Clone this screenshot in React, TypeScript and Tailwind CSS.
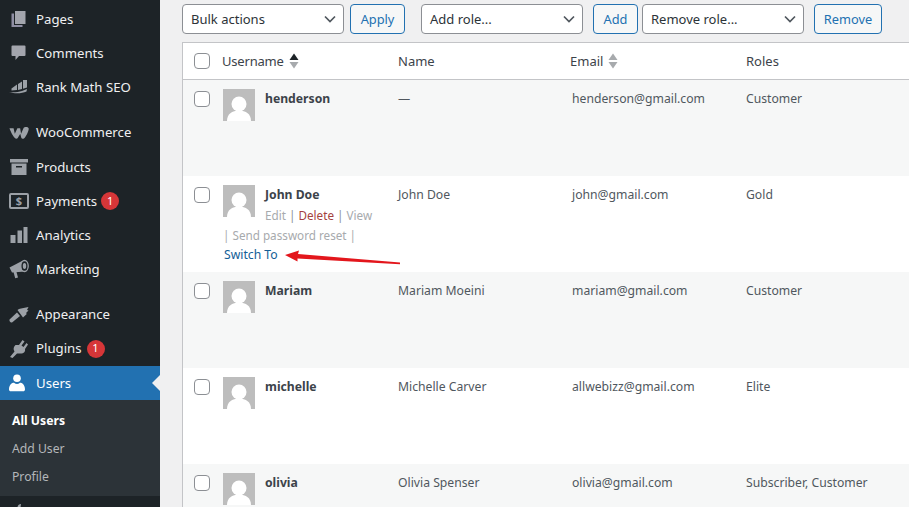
const fontStack = { fontFamily: '"Noto Sans", "Open Sans", sans-serif' };

function PagesIcon() {
  return (
    <svg width="20" height="20" viewBox="0 0 20 20" fill="#a3a5ad">
      <path d="M6 2h10.500v13H6z" />
      <path d="M2.500 4.500H5V16h8.500v2h-11z" fill="#8f8ea3" />
    </svg>
  );
}

function CommentsIcon() {
  return (
    <svg width="20" height="20" viewBox="0 0 20 20" fill="#a3a5ad">
      <path d="M3.500 2.500h12a1 1 0 0 1 1 1V12a1 1 0 0 1-1 1H10l-3.500 4V13h-3a1 1 0 0 1-1-1V3.500a1 1 0 0 1 1-1z" />
    </svg>
  );
}

function RankMathIcon() {
  return (
    <svg width="20" height="20" viewBox="0 0 20 20" fill="#9ca1a7">
      <path d="M0 15c4 .6 9 .2 13-1l5-2-.5 2.500c-5 2.300-12 2.300-17.500.5z" />
      <path d="M2.500 11.500L8 7.500v5.500l-5.500.5zM9 7l4-2.500V12l-4 1zM14 3h4v7.500l-4 1.300z" />
    </svg>
  );
}

function WooIcon() {
  return (
    <svg width="20" height="12" viewBox="0 0 21 14" preserveAspectRatio="none" fill="#9ca1a7">
      <path d="M.5 1.500h4.300l1.300 6.300 2.700-6.300h2.900l1 6.300 2.600-6.500c1-1.600 4.600-1.600 5.300.3.600 1.800-2.300 9-4.600 11.400-1 1-2.600 1-3-.2l-1.200-5-2.600 5c-.7 1-2.300 1-3 .1C4.300 11.300 1.500 5 .5 1.500z" />
    </svg>
  );
}

function ProductsIcon() {
  return (
    <svg width="20" height="20" viewBox="0 0 20 20" fill="#9ca1a7">
      <path d="M1 2h18v3.500H1z" />
      <path fillRule="evenodd" d="M2.500 6.500h15V18h-15zM7 9v1.500h6V9z" />
    </svg>
  );
}

function PaymentsIcon() {
  return (
    <svg width="20" height="16" viewBox="0 0 20 16" fill="none">
      <rect x="1" y="1" width="18" height="14" rx="1" stroke="#9ca1a7" strokeWidth="2" />
      <text x="10" y="12.300" textAnchor="middle" fontSize="11" fontWeight="700" fill="#9ca1a7" fontFamily="Noto Sans">$</text>
    </svg>
  );
}

function AnalyticsIcon() {
  return (
    <svg width="20" height="20" viewBox="0 0 20 20" fill="#9ca1a7">
      <path d="M1.500 10h5v8h-5zM8.500 5.500H13V18H8.500zM14.500 2h4v16h-4z" />
    </svg>
  );
}

function MarketingIcon() {
  return (
    <svg width="20" height="20" viewBox="0 0 20 20" fill="#9ca1a7">
      <path d="M.5 8.500L13 2l3 10.500-13 1z" />
      <path d="M4.500 13h3l1.500 5.500-2.800.7z" />
      <ellipse cx="15.500" cy="7" rx="3.700" ry="5.500" stroke="#9ca1a7" strokeWidth="1.300" fill="#1d2327" />
      <ellipse cx="15.500" cy="7" rx="1.700" ry="3" />
    </svg>
  );
}

function AppearanceIcon() {
  return (
    <svg width="20" height="20" viewBox="0 0 20 20" fill="#9ca1a7">
      <path d="M.5 15.500L8 8.500l3 3.500-8 6.500c-1.500.5-3-1.500-2.500-3z" />
      <path d="M8.500 6l1.500-1 2-.5L19.500 3 18 6l1.500.5-2.500 2.500.8 1L14 13.500z" />
    </svg>
  );
}

function PluginsIcon() {
  return (
    <svg width="20" height="20" viewBox="0 0 20 20" fill="#9ca1a7">
      <path d="M13.500 1l2 1.500-3 4 2 1.500 3-4 1.500 1.500-3 4.500c.5 2.500-1 4.500-4.500 4.500L8 14.500 3.500 19 1 18l4.500-5.500c-1.500-2.500-1-4.500 1-6.500l3.500 0z" />
    </svg>
  );
}

function UsersIcon() {
  return (
    <svg width="18" height="18" viewBox="0 0 18 18" fill="#fff">
      <circle cx="9" cy="4.300" r="3.800" />
      <path d="M1 15.500c0-5 3-6.800 5-6.800 1 .8 2 1.200 3 1.200s2-.4 3-1.200c2 0 5 1.800 5 6.800 0 1-.8 1.800-1.800 1.800H2.800C1.800 17.300 1 16.500 1 15.500z" />
    </svg>
  );
}

function ToolsIcon() {
  return (
    <svg width="20" height="20" viewBox="0 0 20 20" fill="#9ca1a7">
      <path d="M12 1c-2 0-4 2-3.500 4.500L2 12l3 3 6.500-6.500C14 9 16 7 16 5l-3 1-1.500-1.500z" />
    </svg>
  );
}

const menu = [
  { label: "Pages", icon: <PagesIcon />, h: "h-[34px]" },
  { label: "Comments", icon: <CommentsIcon />, h: "h-[34px]" },
  { label: "Rank Math SEO", icon: <RankMathIcon />, h: "h-[34px] mb-[11px]" },
  { label: "WooCommerce", icon: <WooIcon />, h: "h-[35px]" },
  { label: "Products", icon: <ProductsIcon />, h: "h-[34px]" },
  { label: "Payments", icon: <PaymentsIcon />, h: "h-[34px]", badge: "ml-[4px]" },
  { label: "Analytics", icon: <AnalyticsIcon />, h: "h-[34px]" },
  { label: "Marketing", icon: <MarketingIcon />, h: "h-[34px] mb-[11px]" },
  { label: "Appearance", icon: <AppearanceIcon />, h: "h-[34px]" },
  { label: "Plugins", icon: <PluginsIcon />, h: "h-[35px]", badge: "ml-[5px]" },
];

const users = [
  { username: "henderson", name: "—", email: "henderson@gmail.com", roles: "Customer" },
  { username: "John Doe", name: "John Doe", email: "john@gmail.com", roles: "Gold", actions: true },
  { username: "Mariam", name: "Mariam Moeini", email: "mariam@gmail.com", roles: "Customer" },
  { username: "michelle", name: "Michelle Carver", email: "allwebizz@gmail.com", roles: "Elite" },
  { username: "olivia", name: "Olivia Spenser", email: "olivia@gmail.com", roles: "Subscriber, Customer" },
];

const columns = "grid grid-cols-[39px_176px_172px_176px_1fr]";

function Sidebar() {
  return (
    <aside className="w-[160px] shrink-0 bg-[#1d2327] pt-[2px] text-[13.200px] text-[#f0f0f1]">
      {menu.map((item) => (
        <div key={item.label} className={`flex items-center ${item.h}`}>
          <span className="flex w-[36px] justify-center pl-[2px] pr-[1px]">{item.icon}</span>
          <span className="pt-[1px]">{item.label}</span>
          {item.badge && (
            <span className={`flex h-[18px] w-[18px] items-center justify-center rounded-full bg-[#d63638] text-[11px] text-white ${item.badge}`}>
              1
            </span>
          )}
        </div>
      ))}
      <div className="relative flex h-[34px] items-center bg-[#2271b1] text-white">
        <span className="flex w-[36px] justify-center pr-[2px]">
          <UsersIcon />
        </span>
        <span className="pt-[1px]">Users</span>
        <span className="absolute right-0 top-[9px] border-y-[8px] border-r-[8px] border-y-transparent border-r-[#f0f0f1]" />
      </div>
      <div className="bg-[#2c3338] pb-[5px] pl-[12px] pt-[7px] text-[12.200px] text-[#b4b7ba]">
        <div className="flex h-[28px] items-center font-bold text-white">All Users</div>
        <div className="flex h-[28px] items-center">Add User</div>
        <div className="flex h-[28px] items-center">Profile</div>
      </div>
      <div className="flex h-[34px] items-center">
        <span className="flex w-[36px] justify-center pl-[2px] pr-[1px]">
          <ToolsIcon />
        </span>
      </div>
    </aside>
  );
}

function SelectBox({ label, className }: { label: string; className: string }) {
  return (
    <div className={`flex h-[30px] items-center justify-between rounded-[4px] border border-[#8c8f94] bg-white pl-[8px] pr-[7px] text-[13px] text-[#2c3338] ${className}`}>
      <span className="pt-[1px]">{label}</span>
      <svg width="12" height="8" viewBox="0 0 12 8" fill="none" stroke="#50575e" strokeWidth="1.700">
        <path d="M1 1.500l5 5 5-5" />
      </svg>
    </div>
  );
}

function ActionButton({ label, className }: { label: string; className: string }) {
  return (
    <div className={`flex h-[30px] items-center justify-center rounded-[4px] border border-[#2271b1] bg-[#f6f7f7] pt-[1px] text-[12.800px] text-[#2271b1] ${className}`}>
      {label}
    </div>
  );
}

function Checkbox() {
  return <span className="block h-[16px] w-[16px] rounded-[4px] border border-[#8c8f94] bg-white" />;
}

function SortArrows({ active }: { active?: boolean }) {
  return (
    <svg width="10" height="16" viewBox="0 0 10 16" className="ml-[5px]">
      <path d="M5 .5L9.500 7H.5z" fill={active ? "#1d2327" : "#a7aaad"} />
      <path d="M5 15.500L9.500 9H.5z" fill="#a7aaad" />
    </svg>
  );
}

function Avatar() {
  return (
    <svg width="32" height="32" viewBox="0 0 32 32" className="block shrink-0">
      <rect width="32" height="32" fill="#bdbdbd" />
      <circle cx="16" cy="15" r="7.500" fill="#fff" />
      <path d="M4 32c0-7 5-10.500 12-10.500S28 25 28 32z" fill="#fff" />
    </svg>
  );
}

function UserRow({ user, index }: { user: (typeof users)[number]; index: number }) {
  return (
    <div className={`${columns} h-[96px] pt-[9px] text-[12.200px] text-[#50575e] ${index % 2 === 0 ? "bg-[#f6f7f7]" : "bg-white"}`}>
      <div className="pl-[11px] pt-[2px]">
        <Checkbox />
      </div>
      <div className="pl-[1px]">
        <div className="flex">
          <Avatar />
          <div className="pl-[10px] pt-[1px]">
            <div className="font-bold leading-[18px] text-[#3c434a]">{user.username}</div>
            {user.actions && (
              <div className="mt-[2px] text-[11.700px] leading-[18px] text-[#a7aaad]">
                Edit <span className="text-[#8c8f94]">|</span> <span className="text-[#a43f3f]">Delete</span> <span className="text-[#8c8f94]">|</span> View
              </div>
            )}
          </div>
        </div>
        {user.actions && (
          <>
            <div className="mt-[1px] text-[11.700px] leading-[20px] text-[#a7aaad]">| Send password reset |</div>
            <div className="ml-[1px] mt-[1px] leading-[18px] text-[#135e96]">Switch To</div>
          </>
        )}
      </div>
      <div className="pt-[1px] leading-[18px]">{user.name}</div>
      <div className="pl-[2px] pt-[1px] leading-[18px]">{user.email}</div>
      <div className="pt-[1px] leading-[18px]">{user.roles}</div>
    </div>
  );
}

export default function App() {
  return (
    <div className="relative flex h-[507px] w-[909px] overflow-hidden bg-[#f0f0f1]" style={fontStack}>
      <Sidebar />
      <main className="min-w-0 flex-1 pl-[22px] pt-[4px]">
        <div className="flex items-start">
          <SelectBox label="Bulk actions" className="w-[162px]" />
          <ActionButton label="Apply" className="ml-[6px] w-[55px]" />
          <SelectBox label="Add role..." className="ml-[16px] w-[162px]" />
          <ActionButton label="Add" className="ml-[10px] w-[45px]" />
          <SelectBox label="Remove role..." className="ml-[4px] w-[162px]" />
          <ActionButton label="Remove" className="ml-[10px] w-[68px]" />
        </div>
        <section className="mt-[8px] border-l border-t border-[#c3c4c7] bg-white">
          <div className={`${columns} h-[37px] items-center border-b border-[#c3c4c7] text-[13px] text-[#3c434a]`}>
            <div className="pl-[11px]">
              <Checkbox />
            </div>
            <div className="flex items-center">
              <span className="pt-[1px] tracking-[-0.2px]">Username</span>
              <SortArrows active />
            </div>
            <div className="pt-[1px]">Name</div>
            <div className="flex items-center">
              <span className="pt-[1px]">Email</span>
              <SortArrows />
            </div>
            <div className="pt-[1px]">Roles</div>
          </div>
          {users.map((user, index) => (
            <UserRow key={user.username} user={user} index={index} />
          ))}
        </section>
      </main>
      <svg width="130" height="24" viewBox="0 0 130 24" className="absolute left-[280px] top-[248px]">
        <path d="M5 7l14-4.500-1 3.500 102 8.500v1.800L17.500 10.500l0 3z" fill="#e3161c" />
      </svg>
    </div>
  );
}
